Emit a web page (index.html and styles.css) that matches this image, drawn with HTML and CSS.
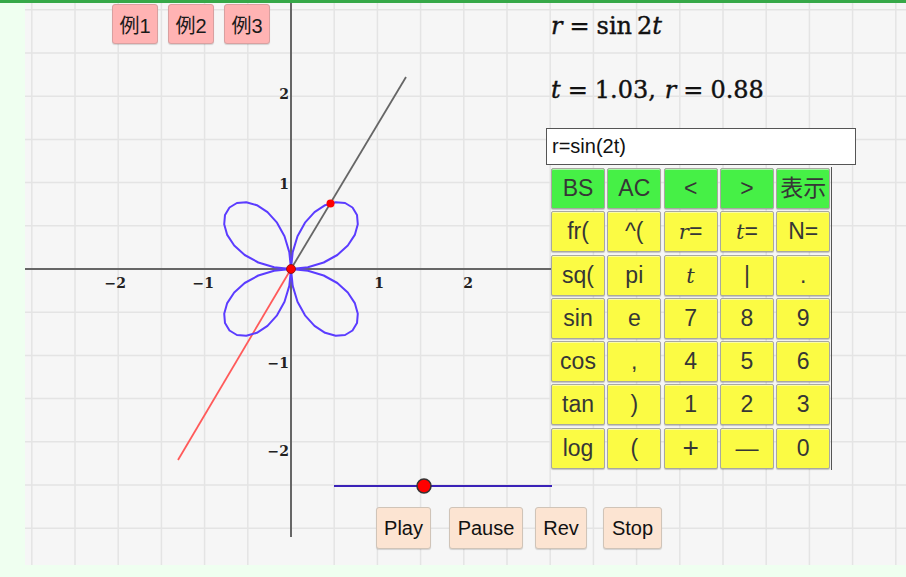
FILE: index.html
```html
<!DOCTYPE html>
<html lang="ja">
<head>
<meta charset="utf-8">
<title>極方程式グラフ</title>
<link rel="stylesheet" href="styles.css">
</head>
<body>
<div class="app">
  <div class="stage">
    <svg class="graph" width="881" height="562" viewBox="0 0 881 562">
      <path class="grid" d="M6.8 0V562M50 0V562M93.2 0V562M136.4 0V562M179.6 0V562M222.8 0V562M309.2 0V562M352.4 0V562M395.6 0V562M438.8 0V562M482 0V562M525.2 0V562M568.4 0V562M611.6 0V562M654.8 0V562M698 0V562M741.2 0V562M784.4 0V562M827.6 0V562M870.8 0V562M0 6.8H881M0 50H881M0 93.2H881M0 136.4H881M0 179.6H881M0 222.8H881M0 309.2H881M0 352.4H881M0 395.6H881M0 438.8H881M0 482H881M0 525.2H881"/>
      <line class="axis" x1="0" y1="266" x2="530" y2="266"/>
      <line class="axis" x1="266" y1="0" x2="266" y2="534"/>
      <g class="labels">
        <text x="101" y="285" text-anchor="end">−2</text>
        <text x="189" y="285" text-anchor="end">−1</text>
        <text x="359" y="285" text-anchor="end">1</text>
        <text x="448" y="285" text-anchor="end">2</text>
        <text x="264" y="96" text-anchor="end">2</text>
        <text x="264" y="186" text-anchor="end">1</text>
        <text x="264" y="365" text-anchor="end">−1</text>
        <text x="264" y="453" text-anchor="end">−2</text>
      </g>
      <line class="ray" x1="266" y1="266" x2="381" y2="74"/>
      <line class="ray-neg" x1="266" y1="266" x2="153" y2="457"/>
      <polyline id="rose" class="rose" points=""/>
      <circle class="pt" cx="305.5" cy="200.5" r="4"/>
      <circle class="pt origin" cx="266" cy="266" r="4.5"/>
      <line class="slider-track" x1="309" y1="483" x2="527" y2="483"/>
      <circle class="slider-knob" cx="399" cy="483" r="7"/>
    </svg>

    <div class="examples">
      <button class="ex">例1</button>
      <button class="ex">例2</button>
      <button class="ex">例3</button>
    </div>

    <div class="formula f1"><i>r</i><span class="rel">=</span>sin<span class="thin"></span>2<i>t</i></div>
    <div class="formula f2"><i>t</i><span class="rel">=</span>1.03,<span class="thick"></span><i>r</i><span class="rel">=</span>0.88</div>

    <div class="expr">r=sin(2t)</div>

    <div class="keypad">
      <button class="key g">BS</button>
      <button class="key g">AC</button>
      <button class="key g">&lt;</button>
      <button class="key g">&gt;</button>
      <button class="key g">表示</button>
      <button class="key">fr(</button>
      <button class="key">^(</button>
      <button class="key"><i class="var">r</i>=</button>
      <button class="key"><i class="var">t</i>=</button>
      <button class="key">N=</button>
      <button class="key">sq(</button>
      <button class="key">pi</button>
      <button class="key"><i class="var">t</i></button>
      <button class="key">|</button>
      <button class="key">.</button>
      <button class="key">sin</button>
      <button class="key">e</button>
      <button class="key">7</button>
      <button class="key">8</button>
      <button class="key">9</button>
      <button class="key">cos</button>
      <button class="key">,</button>
      <button class="key">4</button>
      <button class="key">5</button>
      <button class="key">6</button>
      <button class="key">tan</button>
      <button class="key">)</button>
      <button class="key">1</button>
      <button class="key">2</button>
      <button class="key">3</button>
      <button class="key">log</button>
      <button class="key">(</button>
      <button class="key big">+</button>
      <button class="key">—</button>
      <button class="key">0</button>
    </div>

    <div class="controls">
      <button class="ctl play">Play</button>
      <button class="ctl pause">Pause</button>
      <button class="ctl rev">Rev</button>
      <button class="ctl stop">Stop</button>
    </div>
  </div>
</div>
<script src="script.js"></script>
</body>
</html>
```

FILE: styles.css
```css
html, body {
  margin: 0;
  padding: 0;
}
body {
  background: #effff0;
  font-family: "Liberation Sans", Arial, sans-serif;
  width: 906px;
  height: 577px;
  overflow: hidden;
}
.app {
  border-top: 3px solid #36a848;
  height: 574px;
}
.stage {
  position: relative;
  margin-left: 25px;
  width: 881px;
  height: 562px;
  background: #f6f6f6;
  overflow: hidden;
}
.graph {
  display: block;
}
.grid {
  stroke: #e4e4e4;
  stroke-width: 1.5;
  fill: none;
}
.axis {
  stroke: #666;
  stroke-width: 2;
}
.labels text {
  font-family: "DejaVu Serif", "Liberation Serif", serif;
  font-weight: bold;
  font-size: 14px;
  fill: #222;
}
.ray {
  stroke: #666;
  stroke-width: 1.8;
}
.ray-neg {
  stroke: #ff5a5a;
  stroke-width: 1.8;
}
.rose {
  fill: none;
  stroke: #5b3cff;
  stroke-width: 2;
  stroke-linejoin: round;
}
.pt {
  fill: #ff0000;
}
.origin {
  stroke: #7a1010;
  stroke-width: 0.8;
}
.slider-track {
  stroke: #3a22b8;
  stroke-width: 2;
}
.slider-knob {
  fill: #ff0000;
  stroke: #333;
  stroke-width: 1.5;
}

/* example buttons */
.examples {
  position: absolute;
  left: 87px;
  top: 1px;
  display: flex;
  gap: 10px;
}
.ex {
  width: 46px;
  height: 40px;
  padding: 0;
  border: 1px solid #d9a0a0;
  border-radius: 3px;
  background: #ffb3b3;
  color: #1a1a1a;
  font-family: "Liberation Sans", "Noto Sans CJK JP", sans-serif;
  font-size: 20px;
  box-shadow: 0 1px 1px rgba(0,0,0,0.15);
}

/* formulas */
.formula {
  position: absolute;
  left: 526px;
  font-family: "DejaVu Serif", "Liberation Serif", serif;
  font-size: 24px;
  line-height: 30px;
  color: #111;
  white-space: nowrap;
  -webkit-text-stroke: 0.4px #111;
}
.formula i {
  font-style: italic;
}
.f1 {
  top: 8px;
}
.f2 {
  top: 72px;
}
.rel {
  margin: 0 7px;
}
.thin {
  display: inline-block;
  width: 5px;
}
.thick {
  display: inline-block;
  width: 9px;
}

/* expression field */
.expr {
  position: absolute;
  left: 521px;
  top: 125px;
  width: 303px;
  height: 35px;
  padding-left: 5px;
  background: #fff;
  border: 1px solid #555;
  font-size: 20px;
  line-height: 35px;
  color: #111;
}

/* keypad */
.keypad {
  position: absolute;
  left: 525px;
  top: 164px;
  display: grid;
  grid-template-columns: repeat(5, 54px);
  grid-auto-rows: 41px;
  column-gap: 2.3px;
  row-gap: 2.3px;
  padding: 1px;
  border-right: 1px solid #555;
}
.key {
  padding: 0;
  margin: 0;
  border: 1px solid #a8a8a0;
  border-radius: 2px;
  background: #fbfb44;
  color: #363636;
  font-family: "Liberation Sans", "Noto Sans CJK JP", sans-serif;
  font-size: 23px;
  line-height: 1;
  box-shadow: inset 0 1px 0 rgba(255,255,255,0.5), 0 1px 1px rgba(0,0,0,0.2);
}
.key.g {
  background: #46f046;
}
.key.big {
  font-size: 28px;
  font-weight: 300;
}
.var {
  font-family: "DejaVu Serif", "Liberation Serif", serif;
  font-style: italic;
  font-size: 21px;
}

/* controls */
.controls {
  position: absolute;
  left: 351px;
  top: 504px;
  display: flex;
}
.ctl {
  height: 42px;
  padding: 0;
  border: 1px solid #d0c4b8;
  border-radius: 3px;
  background: #fce4d2;
  color: #111;
  font-family: "Liberation Sans", Arial, sans-serif;
  font-size: 20px;
  box-shadow: 0 1px 1px rgba(0,0,0,0.15);
}
.play { width: 55px; }
.pause { width: 74px; margin-left: 18px; }
.rev { width: 52px; margin-left: 12px; }
.stop { width: 59px; margin-left: 16px; }
```

FILE: script.js
```js
(function () {
  var cx = 266, cy = 266, u = 87, n = 64;
  var pts = [];
  for (var i = 0; i <= n; i++) {
    var t = i * 2 * Math.PI / n;
    var r = Math.sin(2 * t);
    pts.push((cx + u * r * Math.cos(t)).toFixed(1) + ',' + (cy - u * r * Math.sin(t)).toFixed(1));
  }
  document.getElementById('rose').setAttribute('points', pts.join(' '));
})();
```
